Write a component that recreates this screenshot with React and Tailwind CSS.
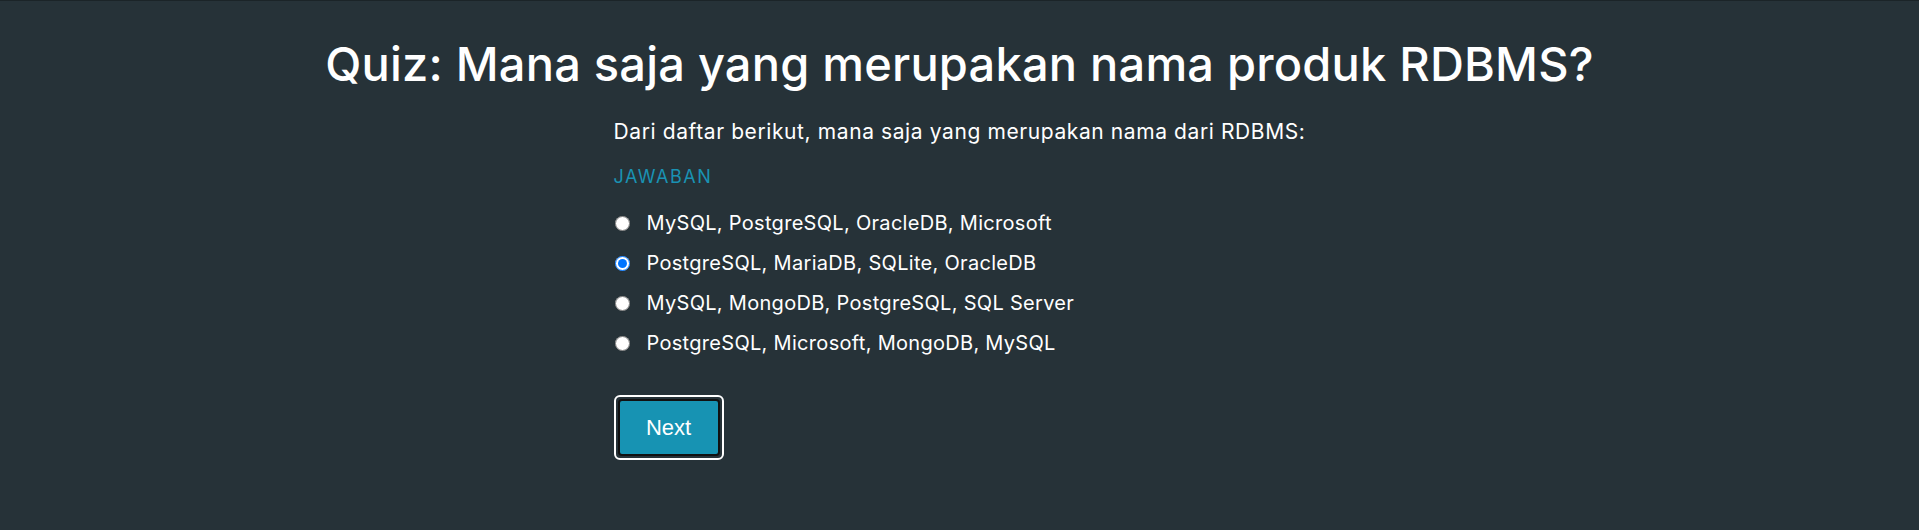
import { useState } from "react"

const options = [
  "MySQL, PostgreSQL, OracleDB, Microsoft",
  "PostgreSQL, MariaDB, SQLite, OracleDB",
  "MySQL, MongoDB, PostgreSQL, SQL Server",
  "PostgreSQL, Microsoft, MongoDB, MySQL"
]

function App() {
  const [answer, setAnswer] = useState(1)

  return (
    <div className="min-h-screen bg-[#263238] border-t border-[#1b2428] font-['Inter','Noto_Sans',sans-serif] text-white">
      <h1 className="pt-[33px] text-center text-[47px] leading-[60px] font-medium tracking-[0.2px]">
        Quiz: Mana saja yang merupakan nama produk RDBMS?
      </h1>

      <div className="w-[692px] mx-auto mt-[23px]">
        <p className="text-[21px] leading-[30px] tracking-[0.6px]">
          Dari daftar berikut, mana saja yang merupakan nama dari RDBMS:
        </p>

        <h3 className="mt-[15px] text-[18px] leading-[30px] text-[#1a92b3] tracking-[1.5px]">
          JAWABAN
        </h3>

        <div className="mt-[16px] flex flex-col gap-[10px]">
          {options.map((opt, i) => (
            <label key={i} className="flex items-center gap-[17px] h-[30px] text-[20px] tracking-[0.3px] cursor-pointer">
              <input
                type="radio"
                name="answer"
                checked={answer === i}
                onChange={() => setAnswer(i)}
                className="w-[15px] h-[15px] ml-[1px]"
              />
              {opt}
            </label>
          ))}
        </div>

        <button className="mt-[37px] w-[110px] h-[65px] rounded-[6px] border-2 border-white p-[2px]">
          <span className="flex items-center justify-center w-full h-full rounded-[4px] border-2 border-[#111] bg-[#1793b3] font-['Liberation_Sans',Arial,sans-serif] text-[22px] text-white">
            Next
          </span>
        </button>
      </div>
    </div>
  )
}

export default App
